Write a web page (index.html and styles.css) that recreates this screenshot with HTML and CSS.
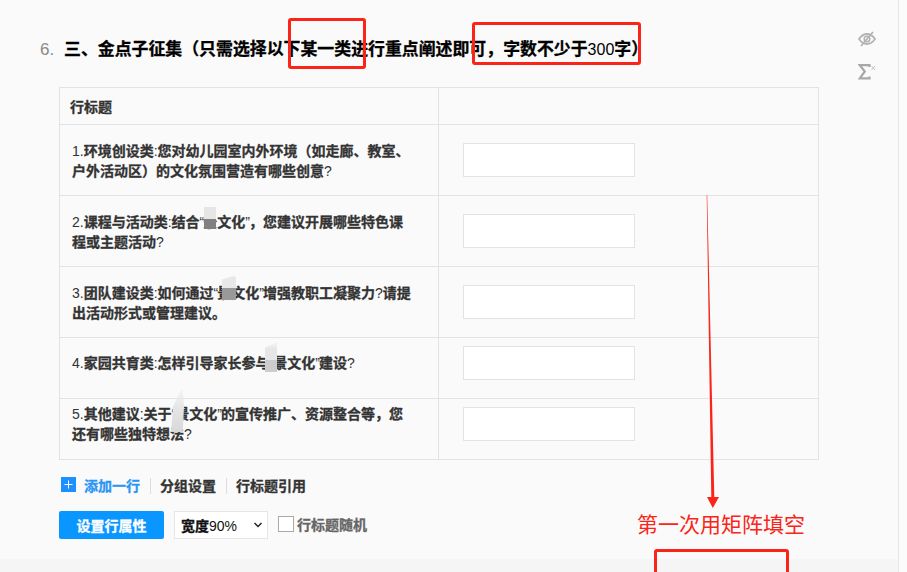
FILE: index.html
```html
<!DOCTYPE html>
<html lang="zh">
<head>
<meta charset="utf-8">
<title>矩阵填空</title>
<link rel="stylesheet" href="styles.css">
</head>
<body>
<main class="panel">
  <div class="q-head">
    <span class="q-num">6.</span>
    <h2 class="q-title">三、金点子征集（只需选择以下某一类进行重点阐述即可，字数不少于<span class="thin digits">300</span>字）</h2>
    <div class="q-tools">
      <svg class="tool" width="18" height="16" viewBox="0 0 18 16"><path d="M1 8c2.500-3.600 5-5 8-5s5.500 1.400 8 5c-2.500 3.600-5 5-8 5s-5.500-1.400-8-5z" fill="none" stroke="#b3b3b3" stroke-width="1.800"/><circle cx="9" cy="8" r="2.800" fill="none" stroke="#b3b3b3" stroke-width="1.500"/><path d="M15 1 3 15" stroke="#b3b3b3" stroke-width="1.800"/></svg>
      <svg class="tool" width="18" height="16" viewBox="0 0 18 16"><path d="M11.500 3V1.200H1.800l5 6.300-5 6.800h9.700V12.500" fill="none" stroke="#a8a8a8" stroke-width="2.200"/><path d="m13.500 2 3.500 4m0-4-3.500 4" stroke="#c4c4c4" stroke-width="1"/></svg>
    </div>
  </div>

  <table class="matrix">
    <tr class="row-head"><th>行标题</th><th></th></tr>
    <tr class="row-tall">
      <td class="label"><span class="thin">1.</span>环境创设类<span class="thin">:</span>您对幼儿园室内外环境（如走廊、教室、户外活动区）的文化氛围营造有哪些创意<span class="thin">?</span></td>
      <td class="cell"><div class="blank"></div></td>
    </tr>
    <tr class="row-tall">
      <td class="label"><span class="thin">2.</span>课程与活动类<span class="thin">:</span>结合<span class="thin quote">“</span>景文化<span class="thin quote">”</span>，您建议开展哪些特色课程或主题活动<span class="thin">?</span></td>
      <td class="cell"><div class="blank"></div></td>
    </tr>
    <tr class="row-tall">
      <td class="label"><span class="thin">3.</span>团队建设类<span class="thin">:</span>如何通过<span class="thin quote">“</span>景文化<span class="thin quote">”</span>增强教职工凝聚力<span class="thin">?</span>请提出活动形式或管理建议。</td>
      <td class="cell"><div class="blank"></div></td>
    </tr>
    <tr class="row-short">
      <td class="label"><span class="thin">4.</span>家园共育类<span class="thin">:</span>怎样引导家长参与<span class="thin quote">“</span>景文化<span class="thin quote">”</span>建设<span class="thin">?</span></td>
      <td class="cell"><div class="blank"></div></td>
    </tr>
    <tr class="row-short">
      <td class="label"><span class="thin">5.</span>其他建议<span class="thin">:</span>关于<span class="thin quote">“</span>景文化<span class="thin quote">”</span>的宣传推广、资源整合等，您还有哪些独特想法<span class="thin">?</span></td>
      <td class="cell"><div class="blank"></div></td>
    </tr>
  </table>

  <div class="links">
    <span class="add-icon"><svg width="15" height="15" viewBox="0 0 15 15"><path d="M7.500 3.500v8M3.500 7.500h8" stroke="#fff" stroke-width="1"/></svg></span>
    <a class="link link-blue">添加一行</a>
    <a class="link link-sep">分组设置</a>
    <a class="link link-sep">行标题引用</a>
  </div>

  <div class="controls">
    <button class="primary">设置行属性</button>
    <div class="select"><span>宽度<span class="thin">90%</span></span><svg width="10" height="6" viewBox="0 0 10 6"><path d="m1.500 1 3.500 3.500L8.500 1" fill="none" stroke="#222" stroke-width="1.500"/></svg></div>
    <label class="check"><span class="box"></span>行标题随机</label>
  </div>
</main>
<div class="footer-band"></div>

<!-- screenshot retouching patches and annotations, laid over the page -->
<i class="patch p2a"></i><i class="patch p2b"></i>
<i class="patch p3a"></i><i class="patch p3b"></i>
<i class="patch p4a"></i><i class="patch p4b"></i>
<i class="patch p5"></i>

<i class="mark m1"></i>
<i class="mark m2"></i>
<i class="mark m3"></i>
<svg class="arrow" width="20" height="320" viewBox="0 0 20 320"><path d="M6.700 0 7.200 0 14.300 302H19L12.800 313 7 302H11.300z" fill="#fb2418"/></svg>
<div class="note">第一次用矩阵填空</div>
</body>
</html>
```
FILE: styles.css
```css
* { box-sizing: border-box; }
html, body { margin: 0; height: 100%; }
body {
  position: relative;
  width: 907px;
  height: 572px;
  overflow: hidden;
  background: #fbfbfb;
  font-family: "Liberation Sans", "Noto Sans CJK SC", sans-serif;
  color: #222;
}
.panel {
  width: 899px;
  height: 559px;
  padding: 37px 0 0 59px;
  background: #fafafa;
  border-right: 1px solid #e6e6e6;
}
.footer-band {
  width: 899px;
  height: 13px;
  background: #f5f5f5;
  border-right: 1px solid #e6e6e6;
}
.thin { font-weight: 400; -webkit-text-stroke: 0; }
.digits { font-size: 16px; }
.quote { letter-spacing: -1px; }

.q-head {
  display: flex;
  align-items: flex-start;
  height: 50px;
  margin-left: -19px;
}
.q-num {
  width: 24px;
  padding-top: 1px;
  font-size: 17px;
  line-height: 24px;
  color: #888;
}
.q-title {
  width: 600px;
  margin: 0;
  padding-top: 1px;
  font-size: 16.9px;
  line-height: 24px;
  font-weight: 700;
  -webkit-text-stroke: 0.3px #000;
  color: #000;
  white-space: nowrap;
}
.q-tools {
  display: flex;
  flex-direction: column;
  gap: 17px;
  margin: -6px 0 0 194px;
}
.tool { display: block; }

.matrix {
  width: 760px;
  table-layout: fixed;
  border-collapse: collapse;
}
.matrix th, .matrix td { border: 1px solid #e3e3e3; padding: 0; }
.matrix th {
  height: 37px;
  padding-left: 10px;
  font-size: 14px;
  font-weight: 700;
  -webkit-text-stroke: 0.3px #333;
  text-align: left;
  color: #333;
}
.matrix th:first-child, .label { width: 379px; }
.row-tall td { height: 71px; }
.row-short td { height: 61px; padding-bottom: 10px; }
.label {
  padding-left: 12px !important;
  padding-right: 24px !important;
  font-size: 14px;
  line-height: 20px;
  font-weight: 700;
  -webkit-text-stroke: 0.3px #333;
  color: #333;
}
.row-tall .label { padding-top: 1px; }
.cell { padding-left: 24px !important; }
.blank {
  width: 172px;
  height: 34px;
  background: #fff;
  border: 1px solid #e3e3e3;
}

.links {
  display: flex;
  align-items: center;
  height: 20px;
  margin: 16px 0 0 2px;
}
.add-icon {
  display: block;
  width: 15px;
  height: 15px;
  margin: -4px 8px 0 0;
  background: #1e8fff;
}
.add-icon svg { display: block; }
.link {
  font-size: 14px;
  font-weight: 700;
  -webkit-text-stroke: 0.3px currentColor;
  line-height: 16px;
  color: #333;
}
.link-blue { color: #2b95f5; }
.link-sep {
  margin-left: 10px;
  padding-left: 9px;
  border-left: 1px solid #ddd;
}

.controls {
  display: flex;
  align-items: center;
  height: 28px;
  margin-top: 15px;
}
.primary {
  width: 105px;
  height: 28px;
  padding: 0;
  border: 0;
  border-radius: 2px;
  background: #0a96ff;
  color: #fff;
  font: 700 14px "Liberation Sans", "Noto Sans CJK SC", sans-serif;
  -webkit-text-stroke: 0.3px #fff;
}
.select {
  display: flex;
  align-items: center;
  justify-content: space-between;
  width: 94px;
  height: 28px;
  margin-left: 10px;
  padding: 0 4px 0 6px;
  background: #fff;
  border: 1px solid #e6e6e6;
  font-size: 14px;
  font-weight: 700;
  -webkit-text-stroke: 0.3px #111;
  color: #111;
}
.check {
  display: flex;
  align-items: center;
  margin-left: 10px;
  margin-top: -3px;
  font-size: 14px;
  font-weight: 700;
  -webkit-text-stroke: 0.3px #666;
  color: #666;
}
.box {
  width: 16px;
  height: 16px;
  margin-right: 3px;
  background: #fff;
  border: 1px solid #aaa;
}

/* overlays */
.patch { position: absolute; display: block; }
.p2a { left: 204px; top: 207px; width: 12px; height: 12px; background: #e6e6e6; }
.p2b { left: 204px; top: 219px; width: 12px; height: 10px; background: #808080; }
.p3a { left: 222px; top: 276px; width: 14px; height: 12px; background: #e8e8e8; clip-path: polygon(0 30%, 50% 10%, 85% 0, 100% 10%, 100% 100%, 0 100%); }
.p3b { left: 222px; top: 288px; width: 14px; height: 12px; background: #999; }
.p4a { left: 265px; top: 342px; width: 12px; height: 18px; background: linear-gradient(#f6f6f6, #e6e6e6 40%); clip-path: polygon(0 30%, 100% 0, 100% 100%, 0 100%); }
.p4b { left: 265px; top: 360px; width: 12px; height: 12px; background: #ccc; }
.p5 { left: 171px; top: 390px; width: 13px; height: 42px; background: linear-gradient(rgba(235,235,235,.4), #e6e6e6 40%, #d8d8d8); clip-path: polygon(75% 0, 90% 0, 100% 40%, 90% 100%, 0 100%, 15% 40%); }

.mark { position: absolute; display: block; border: 3px solid #fb2418; border-radius: 3px; }
.m1 { left: 288px; top: 18px; width: 78px; height: 51px; }
.m2 { left: 472px; top: 22px; width: 169px; height: 43px; }
.m3 { left: 654px; top: 549px; width: 135px; height: 40px; }
.arrow { position: absolute; left: 700px; top: 195px; }
.note {
  position: absolute;
  left: 637px;
  top: 511px;
  font-size: 21px;
  line-height: 28px;
  color: #fb2418;
  white-space: nowrap;
}
```
